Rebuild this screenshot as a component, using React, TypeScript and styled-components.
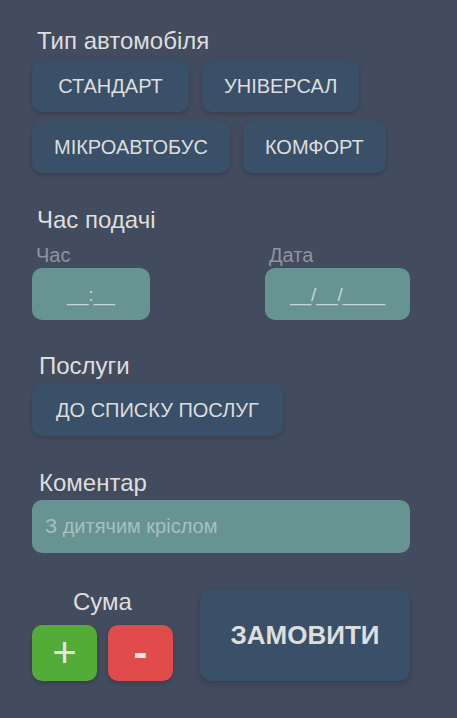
import React from "react";
import styled, { createGlobalStyle } from "styled-components";

const Global = createGlobalStyle`
  html, body { margin: 0; padding: 0; background: #434b5e; }
  body { font-family: "Liberation Sans", Arial, sans-serif; }
  * { box-sizing: border-box; }
`;

const Page = styled.div`
  width: 457px;
  min-height: 718px;
  background: #434b5e;
  padding: 28px 47px 0 32px;
  display: flex;
  flex-direction: column;
`;

const Section = styled.section<{ $mt?: number }>`
  display: flex;
  flex-direction: column;
  margin-top: ${(p) => p.$mt ?? 0}px;
`;

const Title = styled.h2<{ $indent?: number; $mb?: number }>`
  margin: 0 0 ${(p) => p.$mb ?? 6}px ${(p) => p.$indent ?? 5}px;
  font-size: 24px;
  line-height: 26px;
  font-weight: 400;
  color: #dedede;
`;

const ButtonWrap = styled.div`
  display: flex;
  flex-wrap: wrap;
  gap: 9px 13px;
  width: 370px;
`;

const NavyButton = styled.button<{ $minW?: number }>`
  height: 52px;
  min-width: ${(p) => (p.$minW ? `${p.$minW}px` : "0")};
  padding: 0 22px;
  border: none;
  border-radius: 10px;
  background: #3a5069;
  color: #dedede;
  font-family: inherit;
  font-size: 20px;
  text-transform: uppercase;
  box-shadow: 0 2px 4px rgba(0, 0, 0, 0.18);
`;

const WideNavyButton = styled(NavyButton)`
  padding: 0 24px;
`;

const TimeGrid = styled.div`
  display: grid;
  grid-template-columns: 233px 145px;
  margin-top: 5px;
`;

const Field = styled.div`
  display: flex;
  flex-direction: column;
`;

const SmallLabel = styled.label<{ $indent?: number }>`
  margin-left: ${(p) => p.$indent ?? 4}px;
  font-size: 20px;
  line-height: 22px;
  color: #8e94a0;
  margin-bottom: 2px;
`;

const TealBox = styled.div<{ $w?: number }>`
  width: ${(p) => (p.$w ? `${p.$w}px` : "100%")};
  height: 52px;
  border-radius: 10px;
  background: #679393;
  display: flex;
  align-items: center;
  justify-content: center;
  padding-top: 2px;
  color: #c9d5d5;
  font-size: 19px;
`;

const CommentBox = styled(TealBox)`
  height: 53px;
  justify-content: flex-start;
  padding: 0 0 0 13px;
  color: #a9c0c0;
  font-size: 20px;
`;

const Bottom = styled.div`
  display: flex;
  align-items: flex-start;
  gap: 27px;
  margin-top: 36px;
`;

const SumBlock = styled.div`
  display: flex;
  flex-direction: column;
  align-items: center;
`;

const SumTitle = styled.div`
  font-size: 24px;
  line-height: 26px;
  color: #dedede;
  margin-bottom: 10px;
`;

const SumButtons = styled.div`
  display: flex;
  gap: 11px;
`;

const SquareButton = styled.button<{ $bg: string; $bold?: boolean }>`
  width: 65px;
  height: 56px;
  padding: 0;
  border: none;
  border-radius: 10px;
  background: ${(p) => p.$bg};
  color: #e6e6e6;
  font-family: inherit;
  font-size: 42px;
  line-height: 1;
  font-weight: ${(p) => (p.$bold ? 700 : 400)};
  box-shadow: 0 2px 4px rgba(0, 0, 0, 0.18);
  display: flex;
  align-items: center;
  justify-content: center;
`;

const OrderButton = styled.button`
  width: 210px;
  height: 92px;
  border: none;
  border-radius: 12px;
  background: #3a5069;
  color: #dedede;
  font-family: inherit;
  font-size: 26px;
  font-weight: 700;
  box-shadow: 0 3px 6px rgba(0, 0, 0, 0.2);
`;

export default function App() {
  return (
    <>
      <Global />
      <Page>
        <Section>
          <Title>Тип автомобіля</Title>
          <ButtonWrap>
            <NavyButton $minW={157}>Стандарт</NavyButton>
            <NavyButton $minW={157}>Універсал</NavyButton>
            <NavyButton>Мікроавтобус</NavyButton>
            <NavyButton>Комфорт</NavyButton>
          </ButtonWrap>
        </Section>

        <Section $mt={34}>
          <Title>Час подачі</Title>
          <TimeGrid>
            <Field>
              <SmallLabel>Час</SmallLabel>
              <TealBox $w={118}>__:__</TealBox>
            </Field>
            <Field>
              <SmallLabel>Дата</SmallLabel>
              <TealBox $w={145}>__/__/____</TealBox>
            </Field>
          </TimeGrid>
        </Section>

        <Section $mt={33}>
          <Title $indent={7} $mb={5}>Послуги</Title>
          <div>
            <WideNavyButton>До списку послуг</WideNavyButton>
          </div>
        </Section>

        <Section $mt={34}>
          <Title $indent={7} $mb={4}>Коментар</Title>
          <CommentBox>З дитячим кріслом</CommentBox>
        </Section>

        <Bottom>
          <SumBlock>
            <SumTitle>Сума</SumTitle>
            <SumButtons>
              <SquareButton $bg="#53ac38">+</SquareButton>
              <SquareButton $bg="#e04b4b" $bold>-</SquareButton>
            </SumButtons>
          </SumBlock>
          <OrderButton>ЗАМОВИТИ</OrderButton>
        </Bottom>
      </Page>
    </>
  );
}
